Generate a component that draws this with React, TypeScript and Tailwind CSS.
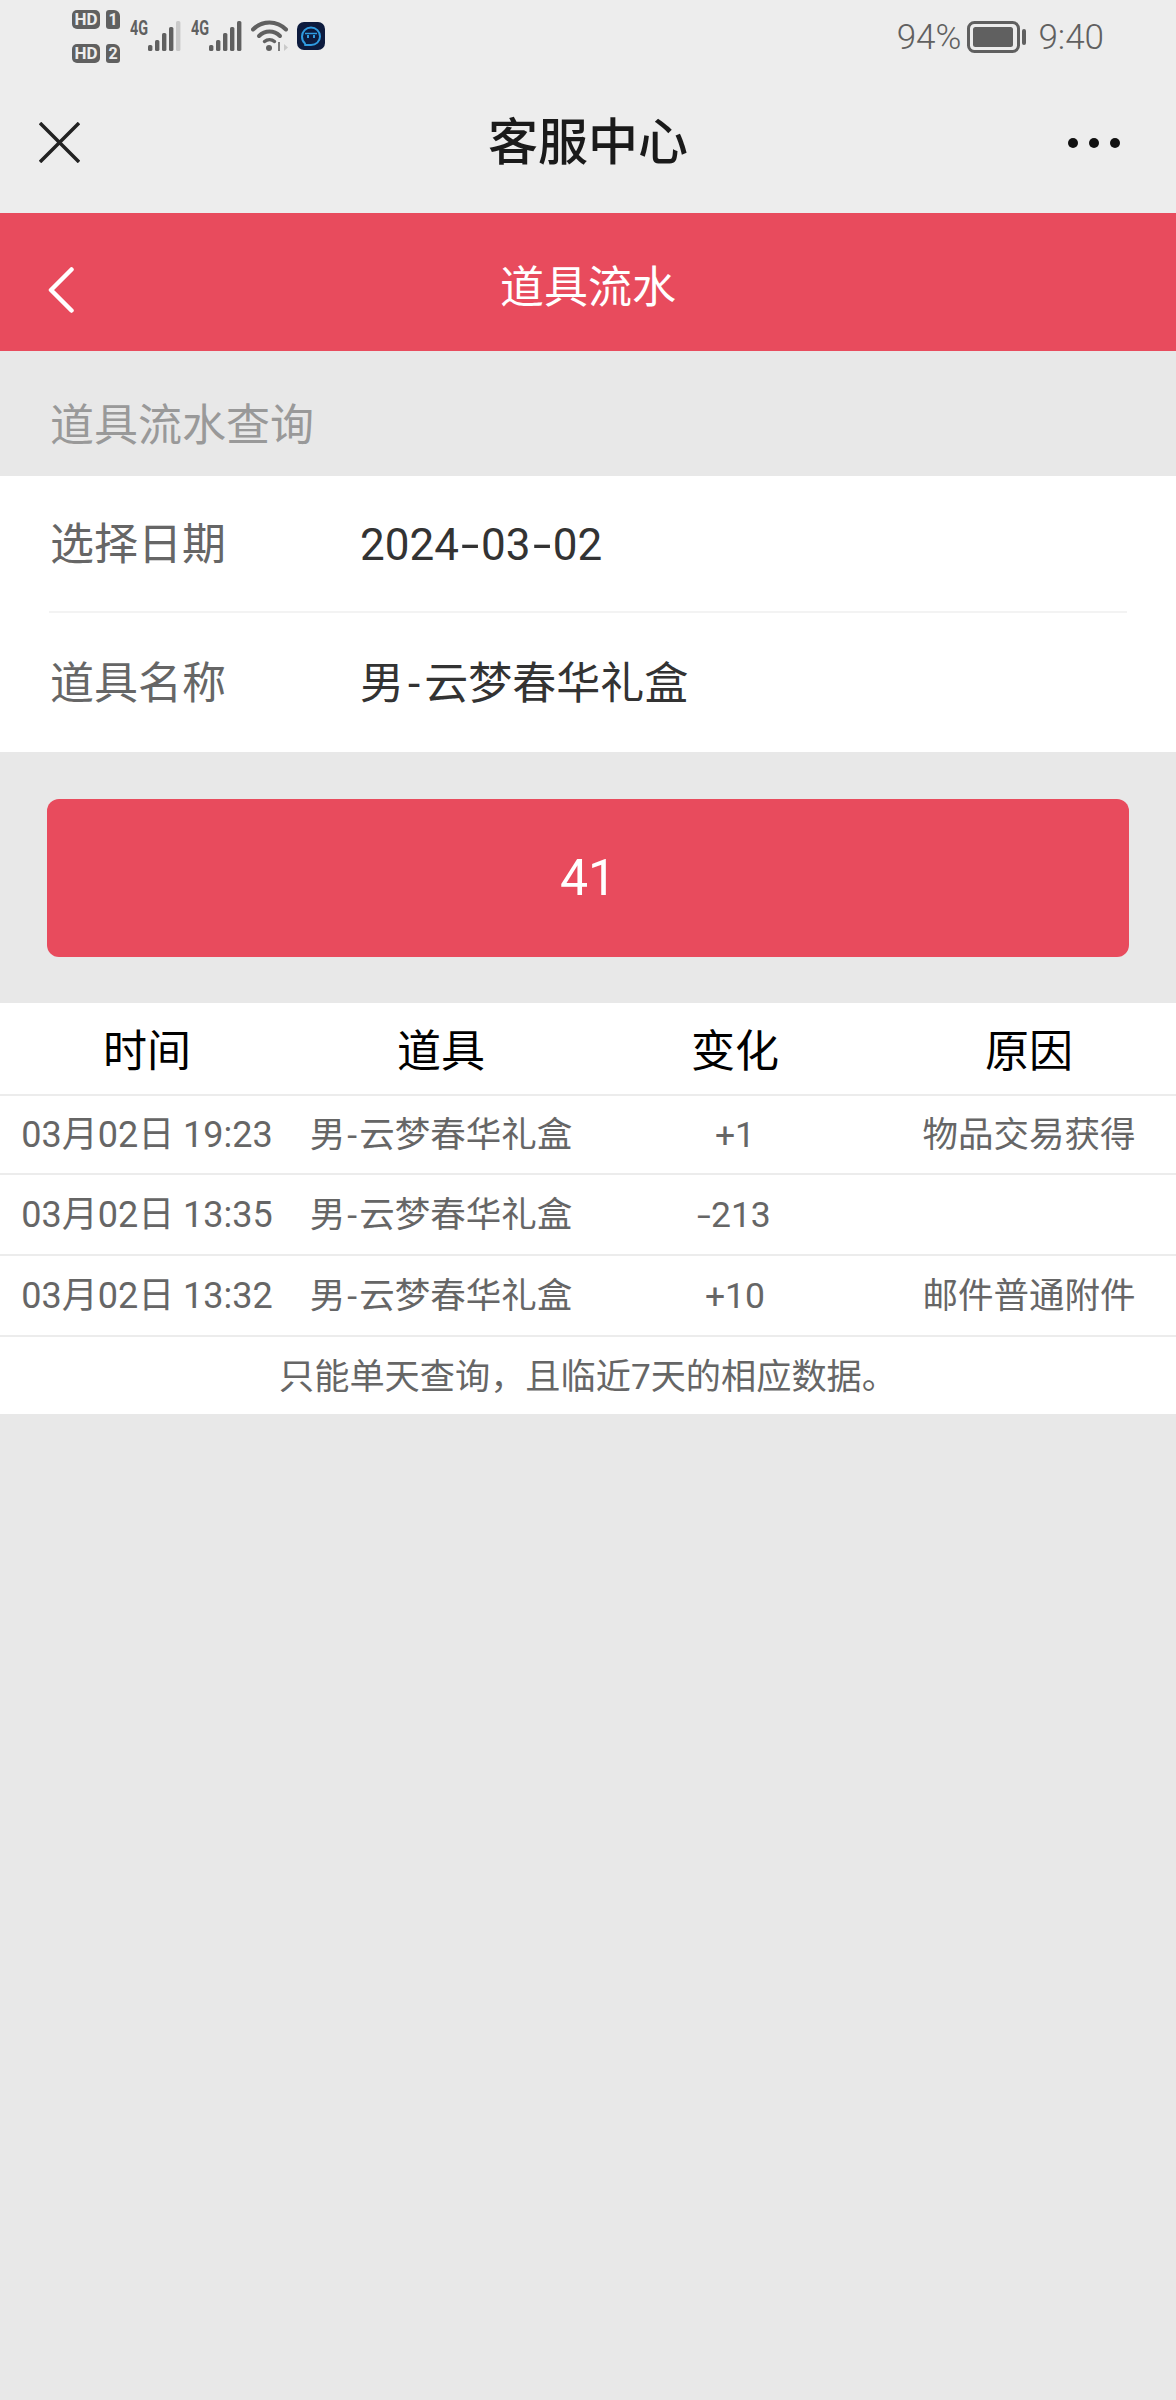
import React from "react";

const font = { fontFamily: '"Roboto", "Noto Sans CJK SC", sans-serif' };

function Signal({ lastFaded }: { lastFaded?: boolean }) {
  const bars = [6, 11, 18, 24, 30];
  return (
    <svg width="33" height="31" viewBox="0 0 33 31" className="mt-[20px]">
      {bars.map((h, i) => (
        <rect
          key={i}
          x={i * 7}
          y={31 - h}
          width="4.4"
          height={h}
          rx="1.6"
          fill={lastFaded && i === 4 ? "#c9c9c9" : "#606060"}
        />
      ))}
    </svg>
  );
}

function Net({ lastFaded }: { lastFaded?: boolean }) {
  return (
    <div className="flex items-start">
      <span className="mt-[17px] w-[18px] origin-left scale-x-[0.72] text-[20px] leading-[22px] font-bold whitespace-nowrap text-[#606060]">4G</span>
      <Signal lastFaded={lastFaded} />
    </div>
  );
}

function HdRow({ n }: { n: string }) {
  return (
    <div className="flex gap-[6px]">
      <span className="flex h-[19px] w-[28px] items-center justify-center rounded-[5px] bg-[#606060] text-[17px] leading-none font-bold text-[#ededed]">HD</span>
      <span className="flex h-[19px] w-[14px] items-center justify-center rounded-[3px] rounded-tr-[6px] bg-[#606060] text-[16px] leading-none font-bold text-[#ededed]">{n}</span>
    </div>
  );
}

function StatusBar() {
  return (
    <div className="flex h-[75px] items-start justify-between pl-[72px] pr-[72px] text-[#606060]">
      <div className="flex items-start">
        <div className="mt-[10px] flex flex-col gap-[15px]">
          <HdRow n="1" />
          <HdRow n="2" />
        </div>
        <div className="ml-[10px] flex gap-[10px]">
          <Net lastFaded />
          <Net />
        </div>
        <svg width="38" height="32" viewBox="0 0 38 32" className="mt-[20px] ml-[9px]" fill="none">
          <path d="M2 9.5C11 0 26 0 35 9.5" stroke="#606060" strokeWidth="4" strokeLinecap="round" />
          <path d="M8 16C14 10 23 10 29 16" stroke="#606060" strokeWidth="4" strokeLinecap="round" />
          <path d="M13.5 21.5C16.5 19 20.5 19 23.5 21.5" stroke="#606060" strokeWidth="3.5" strokeLinecap="round" />
          <circle cx="18" cy="28" r="3" fill="#606060" />
          <path d="M28 22v9" stroke="#7a7a7a" strokeWidth="2" />
          <path d="M33 24l4 3.5-4 3.5z" fill="#c9c9c9" />
        </svg>
        <svg width="28" height="30" viewBox="0 0 28 30" className="mt-[22px] ml-[8px]" fill="none">
          <rect width="28" height="28" rx="7" fill="#0d1b3e" />
          <path d="M8 21.5C5.5 19.5 5 17 5 14.5C5 9.5 9 5.5 14 5.5C19 5.5 23 9.5 23 14.5C23 19.5 19 23 14 23H8" stroke="#2f9be0" strokeWidth="2" strokeLinecap="round" />
          <path d="M8 11.5H20" stroke="#2f9be0" strokeWidth="1.5" />
          <rect x="10" y="13" width="2" height="3" fill="#2f9be0" />
          <rect x="16" y="13" width="2" height="3" fill="#2f9be0" />
        </svg>
      </div>
      <div className="mt-[17px] flex items-start text-[35px] leading-[42px] font-light">
        <span>94%</span>
        <svg width="60" height="32" viewBox="0 0 60 32" className="mt-[4px] ml-[6px]" fill="none">
          <rect x="1.5" y="1.5" width="50" height="29" rx="6" stroke="#606060" strokeWidth="3" />
          <rect x="6" y="6" width="40" height="20" rx="2.5" fill="#606060" />
          <rect x="55" y="8" width="4" height="16" rx="2" fill="#606060" />
        </svg>
        <span className="ml-[11px]">9:40</span>
      </div>
    </div>
  );
}

function NavBar() {
  return (
    <div className="grid h-[138px] grid-cols-[1fr_auto_1fr] items-center pb-[2px] px-[39px]">
      <svg width="41" height="41" viewBox="0 0 41 41" fill="none" className="-mt-[1px]">
        <path d="M1 1L40 40M40 1L1 40" stroke="#222222" strokeWidth="3.5" />
      </svg>
      <div className="text-[50px] leading-[60px] font-medium text-[#1a1a1a]">客服中心</div>
      <div className="mr-[17px] flex justify-end gap-[11px]">
        <span className="h-[10px] w-[10px] rounded-full bg-[#111111]" />
        <span className="h-[10px] w-[10px] rounded-full bg-[#111111]" />
        <span className="h-[10px] w-[10px] rounded-full bg-[#111111]" />
      </div>
    </div>
  );
}

function RedBar() {
  return (
    <div className="grid h-[138px] grid-cols-[1fr_auto_1fr] items-center bg-[#e84b5d] px-[48px]">
      <svg width="26" height="46" viewBox="0 0 26 46" fill="none" className="mt-[16px]">
        <path d="M23.5 2.5L3 23L23.5 43.5" stroke="#ffffff" strokeWidth="4.5" strokeLinecap="round" strokeLinejoin="round" />
      </svg>
      <div className="pt-[11px] text-[44px] leading-[56px] text-white">道具流水</div>
      <div />
    </div>
  );
}

function Dash() {
  return <span className="mx-[5px] inline-block scale-x-[1.5]">-</span>;
}

function FormRow({ label, value, className }: { label: string; value: React.ReactNode; className: string }) {
  return (
    <div className={`flex items-center pt-[2px] pl-[1px] text-[44px] leading-[56px] ${className}`}>
      <span className="w-[310px] text-[#666666]">{label}</span>
      <span className="text-[#333333]">{value}</span>
    </div>
  );
}

const rows = [
  { time: "03月02日 19:23", change: "+1", reason: "物品交易获得", h: "h-[79px]" },
  { time: "03月02日 13:35", change: "-213", reason: "", h: "h-[81px]" },
  { time: "03月02日 13:32", change: "+10", reason: "邮件普通附件", h: "h-[81px]" },
];

function Table() {
  return (
    <div className="bg-white text-center">
      <div className="grid h-[91px] grid-cols-4 items-center pt-[6px] text-[44px] leading-[56px] text-black">
        <span>时间</span>
        <span>道具</span>
        <span>变化</span>
        <span>原因</span>
      </div>
      {rows.map((r) => (
        <div key={r.time} className={`grid grid-cols-4 items-center border-t-2 border-[#ececec] text-[35.5px] leading-[46px] text-[#666666] ${r.h}`}>
          <span className="text-[36px] whitespace-nowrap">{r.time}</span>
          <span className="whitespace-nowrap">
            男<span className="mx-[2px]">-</span>云梦春华礼盒
          </span>
          <span>
            {r.change.startsWith("-") ? (
              <>
                <span className="mr-[2px] inline-block scale-x-[1.4]">-</span>
                {r.change.slice(1)}
              </>
            ) : (
              r.change
            )}
          </span>
          <span className="whitespace-nowrap">{r.reason}</span>
        </div>
      ))}
      <div className="flex h-[79px] items-center justify-center border-t-2 border-[#ececec] pt-[2px] text-[35.2px] leading-[46px] text-[#666666]">
        只能单天查询，且临近7天的相应数据。
      </div>
    </div>
  );
}

export default function App() {
  return (
    <div className="flex min-h-[2400px] w-[1176px] flex-col bg-[#e8e8e8]" style={font}>
      <div className="bg-[#ededed]">
        <StatusBar />
        <NavBar />
      </div>
      <RedBar />
      <div className="flex h-[125px] items-center pl-[50px] pt-[24px] text-[44px] leading-[56px] text-[#999999]">道具流水查询</div>
      <div className="bg-white">
        <div className="mx-[49px] border-b-2 border-[#f3f3f3]">
          <FormRow
            label="选择日期"
            value={
              <>
                2024<Dash />03<Dash />02
              </>
            }
            className="h-[135px]"
          />
        </div>
        <div className="mx-[49px]">
          <FormRow
            label="道具名称"
            value={
              <>
                男<span className="mx-[4px]">-</span>云梦春华礼盒
              </>
            }
            className="h-[139px]"
          />
        </div>
      </div>
      <div className="px-[47px] pt-[47px] pb-[46px]">
        <div className="flex h-[158px] items-center justify-center rounded-[12px] bg-[#e84b5d] text-[50px] leading-none text-white">41</div>
      </div>
      <Table />
    </div>
  );
}
